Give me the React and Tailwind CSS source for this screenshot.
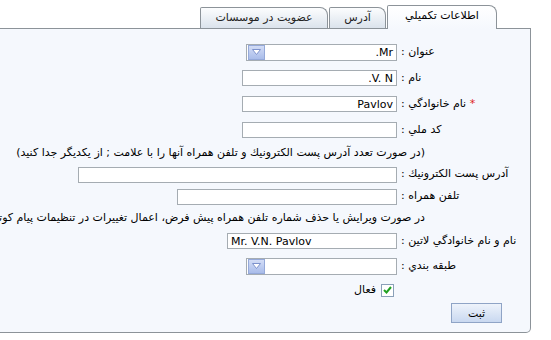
import React from "react";

const Field = ({ w, value, ltr }) => (
  <div
    dir={ltr ? "ltr" : "rtl"}
    className={`${w} h-[16px] bg-white border border-[#a5acb2] px-[3px] flex items-center text-[11px] text-black leading-none`}
  >
    {value}
  </div>
);

const Select = ({ value }) => (
  <div className="w-[151px] h-[17px] bg-white border border-[#a5acb2] flex items-center">
    <div className="w-[17px] h-[15px] ml-[1px] border border-[#95a9d9] bg-gradient-to-b from-[#d3ddf6] to-[#a9bcea] flex items-center justify-center">
      <svg width="9" height="6" viewBox="0 0 9 6">
        <path d="M0.5 0.5 L8.5 0.5 L4.5 5.5 Z" fill="#ffffff" stroke="#7d92cc" strokeWidth="1" />
      </svg>
    </div>
    <div dir="rtl" className="flex-1 px-[3px] text-[11px] leading-none">{value}</div>
  </div>
);

const Row = ({ h, label, children }) => (
  <div className={`flex items-center ${h}`}>
    <div className="w-[397px] shrink-0 flex justify-end">{children}</div>
    <div dir="rtl" className="ml-[4px] whitespace-nowrap text-black">{label}</div>
  </div>
);

const Note = ({ h, children }) => (
  <div dir="rtl" className={`w-[425px] ${h} flex items-center whitespace-nowrap text-black`}>
    {children}
  </div>
);

export default function App() {
  return (
    <div className="w-[551px] h-[340px] bg-white overflow-hidden font-['DejaVu_Sans',sans-serif] text-[11px]">
      {/* Tabs */}
      <div dir="rtl" className="w-[531px] h-[28px] pr-[34px] flex items-end gap-[1px]">
        <div className="relative z-10 w-[110px] h-[24px] mb-[-1px] bg-gradient-to-b from-white to-[#f5f8fd] border border-b-0 border-[#8c9399] rounded-tr-[8px] rounded-tl-[2px] flex items-center justify-center pb-[2px] text-black">
          اطلاعات تكميلي
        </div>
        <div className="w-[57px] h-[21px] bg-gradient-to-b from-[#fcfdfe] to-[#dbe3ec] border border-b-0 border-[#8c9399] rounded-tr-[8px] rounded-tl-[2px] flex items-center justify-center text-[#222]">
          آدرس
        </div>
        <div className="w-[128px] h-[21px] bg-gradient-to-b from-[#fcfdfe] to-[#dbe3ec] border border-b-0 border-[#8c9399] rounded-tr-[8px] rounded-tl-[2px] flex items-center justify-center text-[#222]">
          عضويت در موسسات
        </div>
      </div>

      {/* Panel */}
      <div className="w-[531px] bg-[#f5f8fd] border-t border-r border-b border-[#8c9399] rounded-br-[5px] pt-[10px] pb-[8px]">
        <Row h="h-[26px]" label="عنوان :">
          <Select value="Mr." />
        </Row>
        <Row h="h-[26px]" label="نام :">
          <Field w="w-[155px]" value="V. N." />
        </Row>
        <Row
          h="h-[26px]"
          label={
            <>
              <span className="text-[#e02020]">*</span> نام خانوادگي :
            </>
          }
        >
          <Field w="w-[155px]" value="Pavlov" />
        </Row>
        <Row h="h-[26px]" label="كد ملي :">
          <Field w="w-[155px]" value="" />
        </Row>
        <Note h="h-[21px]">
          (در صورت تعدد آدرس پست الكترونيك و تلفن همراه آنها را با علامت ; از يكديگر جدا كنيد)
        </Note>
        <Row h="h-[21px]" label="آدرس پست الكترونيك :">
          <Field w="w-[319px]" value="" />
        </Row>
        <Row h="h-[23px]" label="تلفن همراه :">
          <Field w="w-[220px]" value="" />
        </Row>
        <Note h="h-[20px]">
          در صورت ويرايش يا حذف شماره تلفن همراه پيش فرض، اعمال تغييرات در تنظيمات پيام كوتاه را فراموش نكنيد
        </Note>
        <Row h="h-[26px]" label="نام و نام خانوادگي لاتين :">
          <Field w="w-[170px]" value="Mr. V.N. Pavlov" ltr />
        </Row>
        <Row h="h-[24px]" label="طبقه بندي :">
          <Select value="" />
        </Row>
        <div className="flex items-center h-[24px]">
          <div dir="rtl" className="w-[397px] flex items-center gap-[5px] pr-[3px]">
            <div className="w-[13px] h-[13px] bg-white border border-[#8aa0b8] flex items-center justify-center">
              <svg width="9" height="8" viewBox="0 0 9 8">
                <path d="M1 4 L3.5 6.5 L8 1" fill="none" stroke="#21a121" strokeWidth="2" />
              </svg>
            </div>
            <span className="text-black">فعال</span>
          </div>
        </div>
        <div className="flex items-center h-[22px]">
          <button className="ml-[451px] w-[51px] h-[20px] border border-[#8fa4c6] bg-gradient-to-b from-[#eef3fb] to-[#c9d8f0] text-black text-[11px] leading-none">
            ثبت
          </button>
        </div>
      </div>
    </div>
  );
}
